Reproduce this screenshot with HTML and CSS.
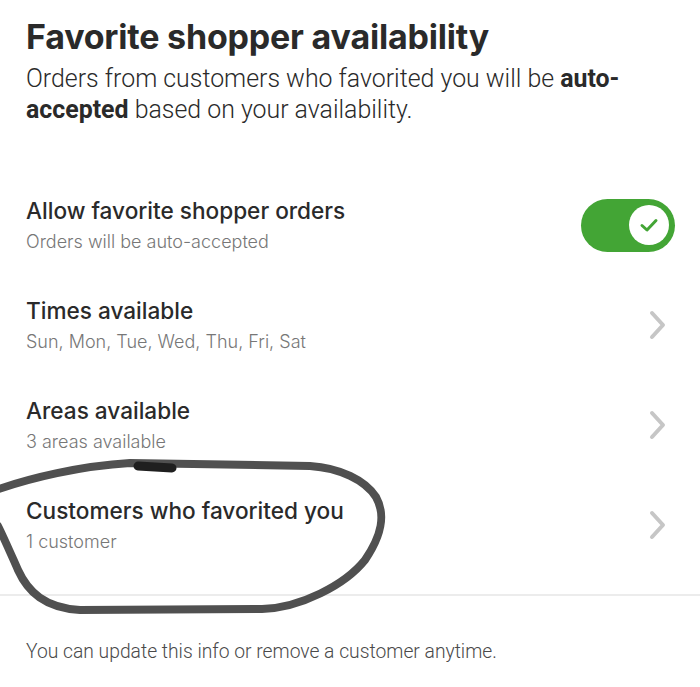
FILE: index.html
```html
<!DOCTYPE html>
<html>
<head>
<meta charset="utf-8">
<link rel="stylesheet" href="styles.css">
</head>
<body>
<div class="page">
  <header class="intro">
    <h1 class="title">Favorite shopper availability</h1>
    <p class="lead">Orders from customers who favorited you will be <b>auto-</b><br><b>accepted</b> based on your availability.</p>
  </header>
  <ul class="rows">
    <li class="row">
      <div class="text">
        <div class="row-title">Allow favorite shopper orders</div>
        <div class="row-sub">Orders will be auto-accepted</div>
      </div>
      <div class="toggle">
        <div class="knob">
          <svg width="22" height="22" viewBox="0 0 22 22"><path d="M4 11.5 L9 16 L18 6.5" fill="none" stroke="#43a535" stroke-width="3" stroke-linecap="round" stroke-linejoin="round"/></svg>
        </div>
      </div>
    </li>
    <li class="row">
      <div class="text">
        <div class="row-title">Times available</div>
        <div class="row-sub">Sun, Mon, Tue, Wed, Thu, Fri, Sat</div>
      </div>
      <svg class="chev" width="20" height="30" viewBox="0 0 20 30"><path d="M4 3 L15 15 L4 27" fill="none" stroke="#c6c6c6" stroke-width="4" stroke-linecap="round" stroke-linejoin="round"/></svg>
    </li>
    <li class="row">
      <div class="text">
        <div class="row-title">Areas available</div>
        <div class="row-sub">3 areas available</div>
      </div>
      <svg class="chev" width="20" height="30" viewBox="0 0 20 30"><path d="M4 3 L15 15 L4 27" fill="none" stroke="#c6c6c6" stroke-width="4" stroke-linecap="round" stroke-linejoin="round"/></svg>
    </li>
    <li class="row">
      <div class="text">
        <div class="row-title">Customers who favorited you</div>
        <div class="row-sub">1 customer</div>
      </div>
      <svg class="chev" width="20" height="30" viewBox="0 0 20 30"><path d="M4 3 L15 15 L4 27" fill="none" stroke="#c6c6c6" stroke-width="4" stroke-linecap="round" stroke-linejoin="round"/></svg>
    </li>
  </ul>
  <p class="footer">You can update this info or remove a customer anytime.</p>
  <svg class="scribble" width="700" height="687" viewBox="0 0 700 687">
    <path d="M -4 490 C 30 478, 80 466, 130 463 L 310 466 C 340 468, 365 480, 376 497 C 386 515, 382 535, 365 560 C 345 585, 300 608, 262 609 L 80 610 C 45 608, 28 592, 18 570 C 10 552, 4 538, -2 526" fill="none" stroke="#505050" stroke-width="8" stroke-linecap="round" stroke-linejoin="round"/>
    <path d="M 138 466 L 172 468" fill="none" stroke="#1f1f1f" stroke-width="9" stroke-linecap="round"/>
  </svg>
</div>
</body>
</html>
```

FILE: styles.css
```css
html, body {
  margin: 0;
  padding: 0;
  background: #ffffff;
}
.page {
  position: relative;
  width: 700px;
  height: 687px;
  overflow: hidden;
}
.intro {
  padding: 15px 26px 0 26px;
}
.title {
  margin: 0;
  font-family: Inter, "Liberation Sans", sans-serif;
  font-weight: 700;
  font-size: 34px;
  line-height: 44px;
  color: #2a2a2a;
  letter-spacing: -0.2px;
}
.lead {
  margin: 4px 0 0 0;
  font-family: Roboto, "Liberation Sans", sans-serif;
  font-weight: 300;
  font-size: 24.9px;
  line-height: 31px;
  color: #2a2a2a;
  white-space: nowrap;
}
.lead b {
  font-weight: 700;
}
.rows {
  list-style: none;
  margin: 50px 0 0 0;
  padding: 0;
}
.row {
  height: 100px;
  display: flex;
  align-items: center;
  justify-content: space-between;
  padding: 0 26px;
  box-sizing: border-box;
}
.text {
  display: flex;
  flex-direction: column;
  gap: 7px;
}
.row-title {
  font-family: Inter, "Liberation Sans", sans-serif;
  font-weight: 500;
  font-size: 22.6px;
  line-height: 27px;
  color: #2a2a2a;
}
.row-sub {
  font-family: Inter, "Liberation Sans", sans-serif;
  font-weight: 300;
  font-size: 18px;
  line-height: 22px;
  color: #777777;
}
.toggle {
  width: 94px;
  height: 53px;
  border-radius: 27px;
  background: #43a535;
  display: flex;
  align-items: center;
  justify-content: flex-end;
  padding-right: 6px;
  box-sizing: border-box;
  margin-right: -1px;
}
.knob {
  width: 40px;
  height: 40px;
  border-radius: 50%;
  background: #ffffff;
  display: flex;
  align-items: center;
  justify-content: center;
}
.chev {
  margin-right: 6px;
}
.footer {
  margin: 19px 0 0 0;
  border-top: 2px solid #ececec;
  padding-top: 44px;
  font-family: Roboto, "Liberation Sans", sans-serif;
  font-weight: 300;
  font-size: 19.3px;
  line-height: 24px;
  color: #4a4a4a;
  padding-left: 26px;
}
.scribble {
  position: absolute;
  left: 0;
  top: 0;
  pointer-events: none;
}
```
